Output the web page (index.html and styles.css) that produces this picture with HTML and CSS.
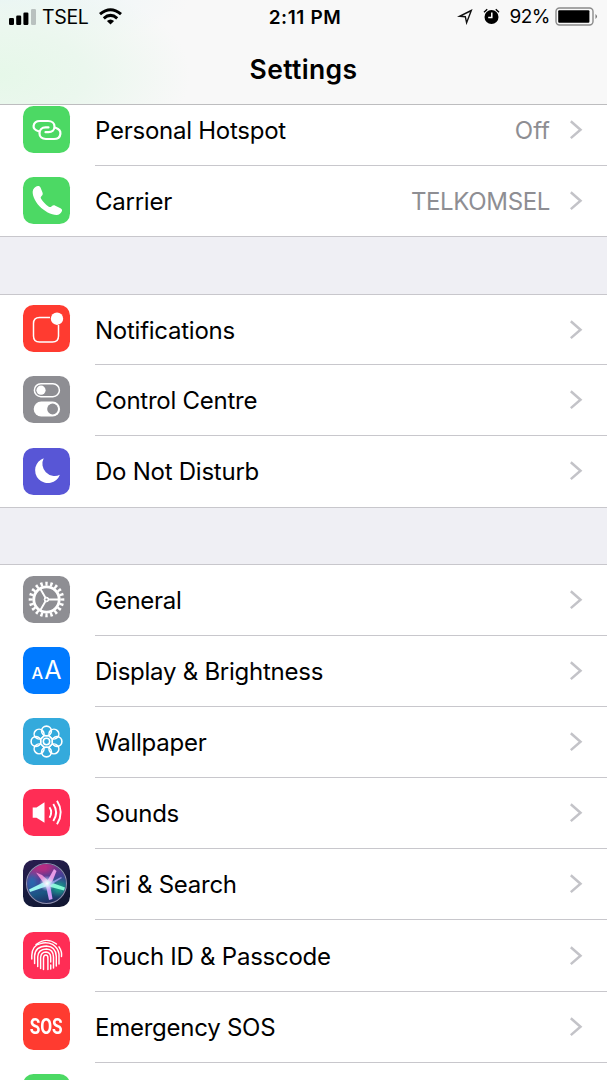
FILE: index.html
```html
<!DOCTYPE html>
<html lang="en">
<head>
<meta charset="utf-8">
<title>Settings</title>
<link rel="stylesheet" href="styles.css">
</head>
<body>
<div class="screen">
<header class="navbar">
  <div class="status">
    <div class="status-left">
      <svg class="signal" width="28" height="16" viewBox="0 0 28 16"><rect x="0" y="9" width="5" height="7" rx="1.2"/><rect x="7.2" y="6.5" width="5" height="9.5" rx="1.2"/><rect x="14.4" y="3.5" width="5" height="12.5" rx="1.2"/><rect x="22" y="0" width="5" height="16" rx="1.2" fill="#b9c1bf"/></svg>
      <span class="carrier">TSEL</span>
      <svg class="wifi" width="23" height="17" viewBox="0 0 23 17" fill="none" stroke="#000" stroke-width="3"><path d="M1 6.2Q11.500 -2.800 22 6.200"/><path d="M4.800 10.300Q11.500 4.500 18.200 10.300"/><path d="M11.500 16.500L7.900 13Q11.500 10 15.100 13Z" fill="#000" stroke="none"/></svg>
    </div>
    <div class="clock">2:11 PM</div>
    <div class="status-right">
      <svg class="location" width="16" height="16" viewBox="0 0 16 16" fill="none" stroke="#111" stroke-width="1.400" stroke-linejoin="miter"><path d="M14.300 1.500L2.500 7.300L8.300 7.700L9.600 13.700Z"/></svg>
      <svg class="alarm" width="17" height="17" viewBox="0 0 17 17"><circle cx="8.500" cy="9" r="7"/><path d="M1 4.200L4.200 1.300M16 4.200L12.800 1.300" stroke="#000" stroke-width="1.400"/><path d="M8.800 4.600V9.500H5.200" fill="none" stroke="#fff" stroke-width="1.500"/></svg>
      <span class="percent">92%</span>
      <svg class="battery" width="43" height="19" viewBox="0 0 43 19"><rect x="1" y="1" width="37" height="17" rx="3.500" fill="none" stroke="#8b8b8b" stroke-width="1.400"/><rect x="3.200" y="3.300" width="31.200" height="12.400" rx="1"/><path d="M40.500 7Q43.500 9.500 40.500 12Z" fill="#777"/></svg>
    </div>
  </div>
  <h1 class="title">Settings</h1>
</header>

<svg class="defs" width="0" height="0"><defs>
  <g id="chev"><path d="M.8 1.300L10.500 9.700L.8 18.100" fill="none" stroke="#c3c3c8" stroke-width="2.500"/></g>
</defs></svg>

<main>
<section class="group first">
  <div class="row"><div class="icon green"><svg viewBox="0 0 47 47" fill="none" stroke="#fff" stroke-width="2.200" stroke-linecap="round"><path d="M15.500 25.200C12 24 10.300 22.200 10.600 19.800C11 16.800 13.500 15 17 15H25C29 15 31.500 17.200 31.500 20.500C31.500 24 29 26.200 25.500 26.200H22.500"/><path d="M32.500 21.800C36 23 37.700 25 37.400 27.800C37 31 34.500 33 31 33H23C19 33 16.500 30.800 16.500 27.500C16.500 24 19 21.400 22.500 21.400H25.500"/></svg></div><div class="cell"><span class="label">Personal Hotspot</span><span class="value">Off</span><svg class="chevron" viewBox="0 0 13 20"><use href="#chev"/></svg></div></div>
  <div class="row"><div class="icon green"><svg viewBox="0 0 47 47"><path fill="#fff" d="M10.200 12.500C11.500 10.500 13.300 9.300 15 9.100C16.200 9 17 9.600 17.600 10.800L19.500 15.500C20 17 19.700 18 18.600 19C17.600 20 17.500 20.600 18.100 21.800C20 25 22.500 27.600 25.800 29.700C27 30.300 27.700 30.200 28.700 29.200C29.900 28.100 31 28 32.300 28.700L37.500 31.200C39.100 32.200 39.500 33.200 38.600 34.700C37.500 36.500 36 37.900 33.700 37.900C28.500 38 21 34 16.500 29.200C11.700 24 8.300 16.500 10.200 12.500Z"/></svg></div><div class="cell"><span class="label">Carrier</span><span class="value telco">TELKOMSEL</span><svg class="chevron" viewBox="0 0 13 20"><use href="#chev"/></svg></div></div>
</section>

<section class="group second">
  <div class="row"><div class="icon red"><svg viewBox="0 0 47 47"><path d="M27 12.500H16.500Q10.500 12.500 10.500 18.500V31Q10.500 37 16.500 37H29.500Q35.500 37 35.500 31V20" fill="none" stroke="#fff" stroke-width="1.500"/><circle cx="34" cy="13.700" r="6.200" fill="#fff"/></svg></div><div class="cell"><span class="label">Notifications</span><svg class="chevron" viewBox="0 0 13 20"><use href="#chev"/></svg></div></div>
  <div class="row"><div class="icon gray"><svg viewBox="0 0 47 47"><rect x="11.400" y="7.700" width="25" height="13" rx="6.500" fill="none" stroke="#fff" stroke-width="1.500"/><circle cx="18" cy="14.200" r="4.600" fill="#fff"/><rect x="10.700" y="25.500" width="26.400" height="15" rx="7.500" fill="#fff"/><circle cx="29.600" cy="33" r="5.400" fill="#8e8e93"/></svg></div><div class="cell"><span class="label">Control Centre</span><svg class="chevron" viewBox="0 0 13 20"><use href="#chev"/></svg></div></div>
  <div class="row"><div class="icon purple"><svg viewBox="0 0 47 47"><path fill="#fff" d="M20.700 10.200A12.800 12.800 0 1 0 36.900 26.700A12.200 12.200 0 0 1 20.700 10.200Z"/></svg></div><div class="cell"><span class="label">Do Not Disturb</span><svg class="chevron" viewBox="0 0 13 20"><use href="#chev"/></svg></div></div>
</section>

<section class="group third">
  <div class="row"><div class="icon gray"><svg viewBox="0 0 47 47" fill="none" stroke="#fff"><circle cx="23.500" cy="23.500" r="12.700" stroke-width="2.800"/><circle cx="23.500" cy="23.500" r="15.800" stroke-width="4" pathLength="80" stroke-dasharray="1.900 2.100" stroke-dashoffset=".95"/><path d="M23.500 23.500H36.500M23.500 23.500L17 12.300M23.500 23.500L17 34.700" stroke-width="1.900"/><circle cx="23.500" cy="23.500" r="2.300" stroke-width="1" fill="#fff"/><circle cx="23.500" cy="23.500" r="1.100" fill="#8e8e93" stroke="none"/></svg></div><div class="cell"><span class="label">General</span><svg class="chevron" viewBox="0 0 13 20"><use href="#chev"/></svg></div></div>
  <div class="row"><div class="icon blue"><span class="letters"><span class="small-a">A</span><span class="big-a">A</span></span></div><div class="cell"><span class="label">Display &amp; Brightness</span><svg class="chevron" viewBox="0 0 13 20"><use href="#chev"/></svg></div></div>
  <div class="row"><div class="icon cyan"><svg viewBox="0 0 47 47" fill="none" stroke="#fff" stroke-width="1.600"><defs><circle id="petal" cx="23.500" cy="13" r="4.900"/></defs><use href="#petal"/><use href="#petal" transform="rotate(45 23.500 23.500)"/><use href="#petal" transform="rotate(90 23.500 23.500)"/><use href="#petal" transform="rotate(135 23.500 23.500)"/><use href="#petal" transform="rotate(180 23.500 23.500)"/><use href="#petal" transform="rotate(225 23.500 23.500)"/><use href="#petal" transform="rotate(270 23.500 23.500)"/><use href="#petal" transform="rotate(315 23.500 23.500)"/><circle cx="23.500" cy="23.500" r="3.200"/><circle cx="23.500" cy="23.500" r="6" stroke-width="1.200"/></svg></div><div class="cell"><span class="label">Wallpaper</span><svg class="chevron" viewBox="0 0 13 20"><use href="#chev"/></svg></div></div>
  <div class="row"><div class="icon pink"><svg viewBox="0 0 47 47"><path fill="#fff" d="M9.700 18.500H13.500L21.500 13.300V33.700L13.500 28.800H9.700Z"/><path d="M26.500 18.300Q30 23.500 26.500 28.700M30.300 15Q36 23.500 30.300 32M34 11.800Q41.500 23.500 34 35.200" fill="none" stroke="#fff" stroke-width="1.900"/></svg></div><div class="cell"><span class="label">Sounds</span><svg class="chevron" viewBox="0 0 13 20"><use href="#chev"/></svg></div></div>
  <div class="row"><div class="icon siri"><svg viewBox="0 0 47 47"><defs><linearGradient id="orb" x1=".3" y1="0" x2=".6" y2="1"><stop offset="0" stop-color="#a52a83"/><stop offset=".4" stop-color="#4a3f98"/><stop offset=".7" stop-color="#1b5684"/><stop offset="1" stop-color="#20285e"/></linearGradient><radialGradient id="core"><stop offset="0" stop-color="#fff"/><stop offset=".35" stop-color="#dff4ff" stop-opacity=".8"/><stop offset="1" stop-color="#b9c7ff" stop-opacity="0"/></radialGradient><filter id="soft" x="-30%" y="-30%" width="160%" height="160%"><feGaussianBlur stdDeviation=".55"/></filter><filter id="haze" x="-50%" y="-50%" width="200%" height="200%"><feGaussianBlur stdDeviation="3"/></filter><clipPath id="disc"><circle cx="23.500" cy="23.500" r="19.500"/></clipPath></defs>
    <circle cx="23.500" cy="23.500" r="19.500" fill="url(#orb)"/>
    <g clip-path="url(#disc)"><g filter="url(#haze)"><ellipse cx="36" cy="28" rx="7" ry="6" fill="#1ba38a"/><ellipse cx="9" cy="22" rx="4" ry="8" fill="#1d76b5"/><ellipse cx="20" cy="8" rx="9" ry="4" fill="#c72b80"/></g>
    <g filter="url(#soft)"><path d="M23 21L6 29.500L7 32L26 25.500Z" fill="#9cf7f0"/><path d="M22 25L13 12.500L19 15L27 22Z" fill="#ea8bd4"/><path d="M22.500 24L31 9L33.500 11L28 25Z" fill="#e79be6"/><path d="M24 21L42 27.500L41 30.500L24 26Z" fill="#84f8d5"/><path d="M22.500 24L26 40L29.500 39L27 24Z" fill="#cf9af5"/><path d="M25 24L38 17L39 18L26 26Z" fill="#8d92df"/></g></g>
    <circle cx="24" cy="23.500" r="8" fill="url(#core)"/><circle cx="23.500" cy="23.500" r="20" fill="none" stroke="#8d8fb0" stroke-width="1.100"/></svg></div><div class="cell"><span class="label">Siri &amp; Search</span><svg class="chevron" viewBox="0 0 13 20"><use href="#chev"/></svg></div></div>
  <div class="row"><div class="icon pink"><svg viewBox="0 0 47 47" fill="none" stroke="#fff" stroke-width="1.450" stroke-linecap="round"><path d="M13 12.500Q23.500 4.500 33.500 12M36 14.800Q39.200 19.500 38.500 24.500M8.800 27V23.500Q9 13.500 17.500 11.600Q23.500 9.800 29.500 12.300Q35 15.500 36 22V32"/><path d="M11.600 31.500V24Q12 14.300 23.500 14Q33 14.500 33.300 24.500V34"/><path d="M14.700 34.500V25Q15 17.300 23.500 17Q30.300 17.300 30.500 25V36"/><path d="M17.600 36.500V25.500Q18 20.200 23 20Q27.600 20.300 27.700 25.500V30M27.700 33V37"/><path d="M20.500 37.500V26Q20.700 23 22.800 23Q24.900 23 24.900 26V37.500"/></svg></div><div class="cell"><span class="label">Touch ID &amp; Passcode</span><svg class="chevron" viewBox="0 0 13 20"><use href="#chev"/></svg></div></div>
  <div class="row"><div class="icon red"><span class="sos">SOS</span></div><div class="cell"><span class="label">Emergency SOS</span><svg class="chevron" viewBox="0 0 13 20"><use href="#chev"/></svg></div></div>
  <div class="row"><div class="icon green"></div><div class="cell"></div></div>
</section>
</main>
</div>
</body>
</html>
```
FILE: styles.css
```css
* { box-sizing: border-box; }
body { margin: 0; background: #efeff4; font-family: Inter, "Liberation Sans", sans-serif; color: #000; }
.screen { height: 1080px; overflow: hidden; position: relative; padding-top: 95px; }
.navbar {
  position: absolute; top: 0; left: 0; right: 0; height: 105px; z-index: 2;
  border-bottom: 1px solid #bdbdbf;
  background: radial-gradient(ellipse 190px 100px at 0 75px, #e6f8e9 0%, #ebf7ee 45%, rgba(247,247,247,0) 100%),
    radial-gradient(ellipse 190px 50px at 0 0, #eaf5f8 0%, rgba(247,247,247,0) 100%), #f8f8f8;
}
.status { display: grid; grid-template-columns: 1fr auto 1fr; align-items: center; height: 33px; padding: 0 9px; }
.status-left, .status-right { display: flex; align-items: center; }
.status-right { justify-content: flex-end; }
.carrier { font-size: 19.5px; margin-left: 5px; letter-spacing: -.35px; }
.wifi { margin-left: 11px; }
.clock { font-size: 19px; font-weight: 600; letter-spacing: .6px; padding-left: 3px; padding-top: 1px; }
.location { margin-right: 10px; }
.alarm { margin-right: 9px; }
.percent { font-size: 19px; letter-spacing: -.5px; margin-right: 5px; }
.title { margin: 19px 0 0; text-align: center; font-size: 26.500px; line-height: 34px; font-weight: 600; letter-spacing: .35px; }
.defs { display: block; }
.group { background: #fff; }
.second { margin-top: 56.600px; border-top: 1px solid #c8c7cc; }
.third { margin-top: 56px; border-top: 1px solid #c8c7cc; }
.row { display: flex; height: 71.200px; }
.second .row:first-child { height: 70.200px; }
.third .row:first-child { height: 71.200px; }
.second .row:first-child .icon { margin-top: 10.200px; }
.third .row:first-child .icon { margin-top: 11.200px; }
.icon { flex: none; width: 47px; height: 47px; margin: 11.200px 25px 0 23px; border-radius: 10.500px; overflow: hidden; display: flex; align-items: center; justify-content: center; color: #fff; }
.icon svg { display: block; width: 47px; height: 47px; }
.cell { flex: 1; display: flex; align-items: center; border-bottom: 1px solid #c8c7cc; padding-right: 24px; }
.group:not(.third) .row:last-child { border-bottom: 1px solid #c8c7cc; }
.group:not(.third) .row:last-child .cell { border-bottom: 0; }
.label { font-size: 24px; line-height: 30px; flex: 1; padding-top: 2px; letter-spacing: -.25px; }
.value { font-size: 24px; line-height: 30px; color: #8e8e93; margin-right: 20px; padding-top: 2px; }
.telco { letter-spacing: -.35px; }
.chevron { width: 13px; height: 20px; }
.green { background: #4cd964; }
.red { background: #ff3b30; }
.gray { background: #8e8e93; }
.purple { background: #5856d6; }
.blue { background: #007aff; }
.cyan { background: #34aadc; }
.pink { background: #ff2d55; }
.siri { background: linear-gradient(160deg, #2a1d50, #161b3d 60%, #10142e); }
.letters { display: flex; align-items: baseline; gap: 1px; line-height: 1; }
.small-a { font-size: 16.500px; font-weight: 500; }
.big-a { font-size: 25px; }
.sos { font-family: Roboto, sans-serif; font-weight: 700; font-size: 22px; transform: scaleX(.78); }
```
